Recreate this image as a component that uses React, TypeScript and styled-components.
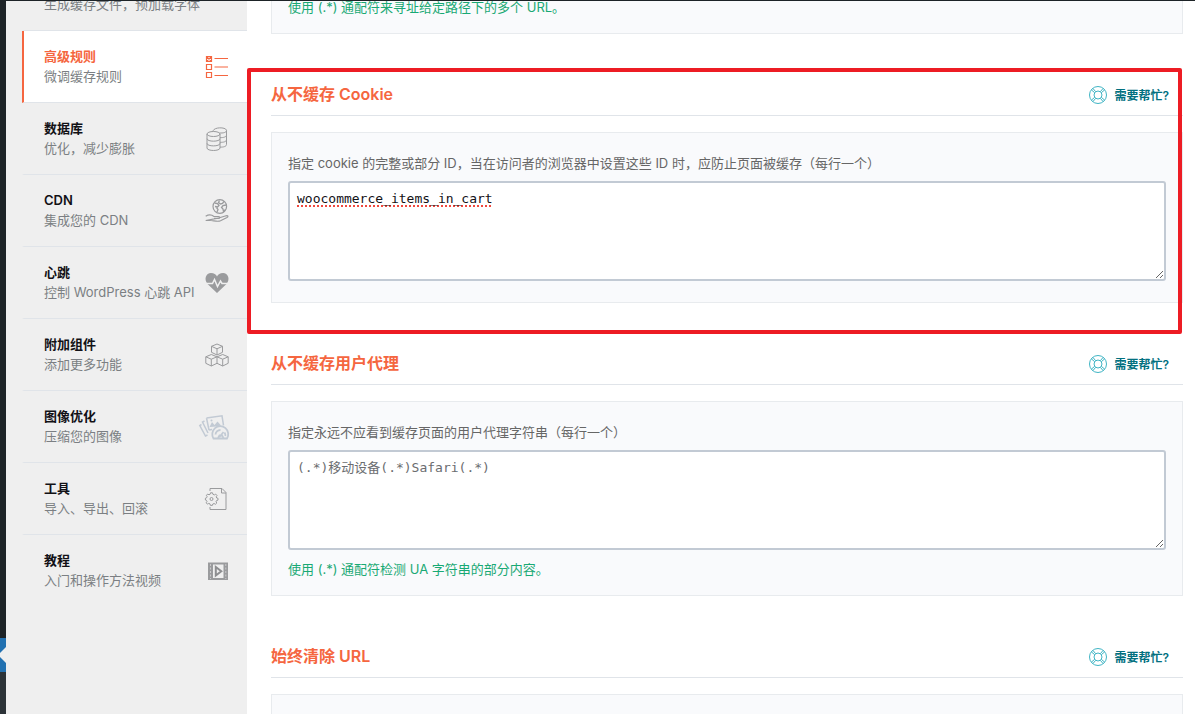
import React from "react";
import styled, { createGlobalStyle, css } from "styled-components";

const GlobalStyle = createGlobalStyle`
  *, *::before, *::after { box-sizing: border-box; }
  body {
    margin: 0;
    background: #fff;
    color: #666;
    font-family: Inter, "Noto Sans CJK SC", sans-serif;
    font-size: 13px;
    line-height: 20px;
  }
`;

const Screen = styled.div`
  display: flex;
  height: 100vh;
  overflow: hidden;
  border-top: 1px solid #1d2327;
`;

const AdminRail = styled.div`
  display: flex;
  flex: none;
  flex-direction: column;
  width: 6px;
  background: #1d2327;
`;

const RailSpace = styled.div`
  flex: 1;
`;

const RailCurrent = styled.div`
  display: flex;
  align-items: center;
  justify-content: flex-end;
  height: 34px;
  background: #2271b1;
`;

const RailArrow = styled.span`
  border: 8px solid transparent;
  border-right-color: #efefef;
  border-left-width: 0;
`;

const RailSubmenu = styled.div`
  height: 42px;
  background: #2c3338;
`;

const Sidebar = styled.nav`
  flex: none;
  width: 241px;
  padding-left: 16px;
  overflow: hidden;
  background: #efefef;
`;

const Menu = styled.ul`
  margin: -42px 0 0;
  padding: 0;
  list-style: none;
`;

const MenuLink = styled.a<{ $active?: boolean; $last?: boolean }>`
  display: flex;
  align-items: center;
  justify-content: space-between;
  height: 72px;
  padding: 0 18px 0 20px;
  border-left: 2px solid transparent;
  border-bottom: 1px solid ${(p) => (p.$last ? "transparent" : "#e0e4e9")};
  background-clip: padding-box;
  color: #7b7f83;
  text-decoration: none;
  ${(p) =>
    p.$active &&
    css`
      border-left-color: #f56640;
      background-color: #fff;
    `}
`;

const MenuLabel = styled.span`
  display: block;
  padding-bottom: 2px;
`;

const MenuTitle = styled.strong<{ $active?: boolean }>`
  display: block;
  color: ${(p) => (p.$active ? "#f56640" : "#121116")};
  font-size: 13px;
  font-weight: 600;
`;

const MenuText = styled.span`
  display: block;
  white-space: nowrap;
`;

const MenuIcon = styled.svg<{ $tone?: string }>`
  display: block;
  flex: none;
  overflow: visible;
  fill: none;
  stroke: ${(p) => p.$tone || "#9a9b9d"};
  stroke-width: 1;
`;

const Content = styled.main`
  flex: 1;
  min-width: 0;
  padding: 0 12px 0 24px;
  overflow: hidden;
`;

const ScrolledCard = styled.div`
  margin-top: -34px;
`;

const Section = styled.section`
  position: relative;
`;

const SectionHeader = styled.header`
  display: flex;
  align-items: flex-end;
  justify-content: space-between;
  margin-bottom: 16px;
  padding: 48px 14px 9px 0;
  border-bottom: 1px solid #e0e4e9;
`;

const SectionTitle = styled.h3`
  margin: 0;
  color: #f56640;
  font-size: 16px;
  font-weight: 600;
  line-height: 24px;
`;

const HelpButton = styled.button`
  display: flex;
  align-items: flex-start;
  gap: 7px;
  padding: 0;
  border: 0;
  background: none;
  color: #02707f;
  font: inherit;
  font-size: 12px;
  font-weight: 600;
  cursor: pointer;
`;

const HelpIcon = styled.svg`
  fill: none;
  stroke: #3fb4c4;
`;

const Card = styled.div`
  padding: 20px 16px 16px;
  border: 1px solid #e8ebee;
  background: #f9fafc;
`;

const Label = styled.label`
  display: block;
  margin-bottom: 8px;
`;

const TextArea = styled.textarea<{ $misspelled?: boolean }>`
  display: block;
  width: 100%;
  height: 100px;
  margin: 0 0 5px;
  padding: 6px 7px;
  border: 2px solid #c2cad4;
  border-radius: 3px;
  background: #fff;
  color: #121116;
  font-family: "DejaVu Sans Mono", "Noto Sans CJK SC", monospace;
  font-size: 13px;
  line-height: 20px;
  resize: vertical;
  outline: none;
  ${(p) =>
    p.$misspelled &&
    css`
      text-decoration: underline dotted #f0483e 2px;
      text-underline-offset: 2px;
      text-decoration-skip-ink: none;
    `}
  &::placeholder {
    color: #6b6d70;
  }
`;

const Hint = styled.p`
  margin: 9px 0 0;
  color: #19a974;
`;

const Highlight = styled.div`
  position: absolute;
  inset: 34px 1px -31px -24px;
  border: 4px solid #ed1c24;
  border-radius: 2px;
  pointer-events: none;
`;

const icons: Record<string, React.ReactNode> = {
  file: (
    <MenuIcon width="30" height="24" viewBox="0 0 30 24">
      <circle cx="18" cy="-1" r="9.5" />
      <path d="M6 -2l2 2" />
    </MenuIcon>
  ),
  rules: (
    <MenuIcon width="24" height="24" viewBox="0 0 24 24" $tone="#f56640">
      <path d="M1.5 1.5h5v5h-5zM1.5 1.5l5 5m0-5l-5 5M1.5 9.5h5v5h-5zM1.5 17.500h5v5h-5z" strokeWidth="1.200" />
      <path d="M9.500 3.500h13.500M9.500 12h13.500M9.500 20.500h13.500" strokeWidth="1.200" />
    </MenuIcon>
  ),
  database: (
    <MenuIcon width="24" height="24" viewBox="0 0 24 24">
      <ellipse cx="8.5" cy="7" rx="6.5" ry="2.5" />
      <path d="M2 7v14c0 3.3 13 3.3 13 0V7M2 11.7c0 3.3 13 3.3 13 0M2 16.4c0 3.3 13 3.3 13 0" />
      <path d="M8 4.5C8-.2 21.500-.2 21.500 3.500c0 2-3.500 2.800-7 2.400M21.500 3.500v14c0 1.900-3 2.800-6.500 2.600M21.500 8c0 1.900-3 2.800-6.500 2.600M21.500 12.700c0 1.900-3 2.800-6.500 2.600" />
    </MenuIcon>
  ),
  cdn: (
    <MenuIcon width="24" height="24" viewBox="0 0 24 24">
      <circle cx="14.800" cy="7.500" r="6.800" strokeWidth="1.200" />
      <path d="M9.500 4l3 .5 1.500 2-1.500 1.500-2.500-.5M12 13l1-2.500-1.500-2M14.500 1.500l-1 2 2 1.500 2-.5 1.500-2M21 6l-3 .5-1.500 2 1.500 1.500.500 2.500 2-2" strokeWidth="1.300" />
      <path d="M.7 17.200c3-1.800 6-1.500 8.300.3h4.500c1.800 0 1.800 1.800 0 1.800H9M14.500 18.800l6.500-2c2-.5 2.700.7 1 1.700l-6.500 3.300c-3 1.300-7-.3-9.500-.3H.7z" strokeWidth="1.200" />
    </MenuIcon>
  ),
  heart: (
    <MenuIcon width="24" height="24" viewBox="0 0 24 24">
      <path
        d="M12 22L2.500 13C-1.500 8 1 2 6 2c3 0 5 1.500 6 3.500C13 3.500 15 2 18 2c5 0 7.500 6 3.500 11z"
        fill="#9a9b9d"
        stroke="none"
      />
      <path d="M1 12.500h6.500l2-4 3 7 3-5.500 1.500 2.500H23" stroke="#efefef" strokeWidth="1.500" />
    </MenuIcon>
  ),
  addons: (
    <MenuIcon width="24" height="24" viewBox="0 0 24 24">
      <path d="M12 1l5.500 2.300v6L12 12 6.500 9.300v-6zM6.500 3.300L12 5.800l5.500-2.500M12 5.800V12" />
      <path d="M6.300 11.500L12 13.800v6.500l-5.700 2.700-5.500-2.700v-6.500zM.8 13.800l5.500 2.400 5.700-2.400M6.300 16.200V23" />
      <path d="M17.700 11.500l5.500 2.300v6.500L17.700 23 12 20.300M12 13.800l5.700-2.300M12 13.800l5.700 2.400 5.500-2.400M17.700 16.200V23" />
    </MenuIcon>
  ),
  images: (
    <MenuIcon width="30" height="24" viewBox="0 0 30 24" $tone="#c2cad4">
      <path d="M7.500 3L23 .8l1.500 9.500M10 15L7.500 3M10 15l3-.5" strokeWidth="1.500" />
      <path d="M10.500 12l2.500-5 2.500 3 3-3.500 3.500 4-4 1z" fill="#c2cad4" stroke="none" />
      <circle cx="12.500" cy="5.500" r="1" fill="#c2cad4" stroke="none" />
      <path d="M5.500 6L3.500 7l5.500 11M2.500 9.500L.8 10.500 6.500 21l2-1" strokeWidth="1.500" />
      <path d="M14.500 23.500a8 8 0 1 1 13.500 0z" strokeWidth="1.800" />
      <path d="M16.500 19.500a5 5 0 0 1 5-4.500M25.500 17.500a5 5 0 0 1 .8 3.500M20.500 22l4-5M19 23l1.500-2.500h2.500l1.500 2.500" strokeWidth="1.800" />
    </MenuIcon>
  ),
  tools: (
    <MenuIcon width="24" height="24" viewBox="0 0 24 24">
      <path d="M5 4V1.500h12l4 4V22.500H5V20M16.500 1.500v4.500H21" />
      <circle cx="6.500" cy="12" r="1.500" />
      <path d="M5.500 6.800h2l.4 1.500 1.500.6 1.300-.8 1.300 1.400-.8 1.300.5 1.200 1.300.3v1.800l-1.400.4-.6 1.300.8 1.200-1.400 1.300-1.300-.8-1.300.5-.4 1.400h-2l-.4-1.500-1.300-.5-1.200.8-1.300-1.400.8-1.300-.6-1.200-1-.3v-1.800l1.200-.4.500-1.300-.7-1.200 1.300-1.300 1.300.8 1.200-.6z" transform="translate(0 -1)" />
    </MenuIcon>
  ),
  video: (
    <MenuIcon width="24" height="24" viewBox="0 0 24 24">
      <path d="M3 3.500h20v17.500H3z" fill="#9a9b9d" stroke="none" />
      <path d="M8 5.500h10.500v13.500H8z" fill="#efefef" stroke="none" />
      <path d="M10.800 8v8.500l5.500-4.250z" stroke="#8d8e90" strokeWidth="2" />
      <path d="M5.500 5v15M20.800 5v15" stroke="#c9c9ca" strokeDasharray="2 1.500" />
    </MenuIcon>
  ),
};

const menu = [
  { icon: "file", title: "文件优化", text: "生成缓存文件，预加载字体" },
  { icon: "rules", title: "高级规则", text: "微调缓存规则", active: true },
  { icon: "database", title: "数据库", text: "优化，减少膨胀" },
  { icon: "cdn", title: "CDN", text: "集成您的 CDN" },
  { icon: "heart", title: "心跳", text: "控制 WordPress 心跳 API" },
  { icon: "addons", title: "附加组件", text: "添加更多功能" },
  { icon: "images", title: "图像优化", text: "压缩您的图像" },
  { icon: "tools", title: "工具", text: "导入、导出、回滚" },
  { icon: "video", title: "教程", text: "入门和操作方法视频" },
];

function Header({ title }: { title: string }) {
  return (
    <SectionHeader>
      <SectionTitle>{title}</SectionTitle>
      <HelpButton type="button">
        <HelpIcon width="18" height="18" viewBox="0 0 18 18" aria-hidden="true">
          <circle cx="9" cy="9" r="8.500" />
          <circle cx="9" cy="9" r="4" />
          <path d="M2.500 4l3 2.500M4 2.500l2.500 3M14 2.500l-2.500 3M15.500 4l-3 2.500M2.500 14l3-2.500M4 15.500l2.500-3M14 15.500l-2.500-3M15.500 14l-3-2.500" />
        </HelpIcon>
        需要帮忙?
      </HelpButton>
    </SectionHeader>
  );
}

export default function App() {
  return (
    <>
      <GlobalStyle />
      <Screen>
        <AdminRail>
          <RailSpace />
          <RailCurrent>
            <RailArrow />
          </RailCurrent>
          <RailSubmenu />
        </AdminRail>
        <Sidebar>
          <Menu>
            {menu.map((item, i) => (
              <li key={item.icon}>
                <MenuLink href="#" $active={item.active} $last={i === menu.length - 1}>
                  <MenuLabel>
                    <MenuTitle $active={item.active}>{item.title}</MenuTitle>
                    <MenuText>{item.text}</MenuText>
                  </MenuLabel>
                  {icons[item.icon]}
                </MenuLink>
              </li>
            ))}
          </Menu>
        </Sidebar>
        <Content>
          <ScrolledCard>
            <Card>
              <Hint>使用 (.*) 通配符来寻址给定路径下的多个 URL。</Hint>
            </Card>
          </ScrolledCard>
          <Section>
            <Header title="从不缓存 Cookie" />
            <Card>
              <Label htmlFor="cookies">
                指定 cookie 的完整或部分 ID，当在访问者的浏览器中设置这些 ID 时，应防止页面被缓存（每行一个）
              </Label>
              <TextArea id="cookies" $misspelled spellCheck={false} defaultValue="woocommerce_items_in_cart" />
            </Card>
            <Highlight />
          </Section>
          <Section>
            <Header title="从不缓存用户代理" />
            <Card>
              <Label htmlFor="agents">指定永远不应看到缓存页面的用户代理字符串（每行一个）</Label>
              <TextArea id="agents" placeholder="(.*)移动设备(.*)Safari(.*)" />
              <Hint>使用 (.*) 通配符检测 UA 字符串的部分内容。</Hint>
            </Card>
          </Section>
          <Section>
            <Header title="始终清除 URL" />
            <Card>
              <TextArea aria-label="始终清除 URL" />
            </Card>
          </Section>
        </Content>
      </Screen>
    </>
  );
}
